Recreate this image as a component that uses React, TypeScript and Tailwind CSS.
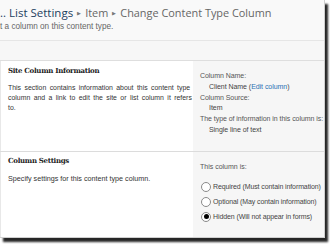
import React from "react";

const Radio = ({ checked, label }: { checked?: boolean; label: string }) => {
  return (
    <div className="flex items-center gap-[2px] h-[15px]">
      <span className="w-[10px] h-[10px] rounded-full border border-[#8a8a8a] bg-white flex items-center justify-center shrink-0">
        {checked && <span className="w-[5px] h-[5px] rounded-full bg-black" />}
      </span>
      <span className="whitespace-nowrap tracking-[-0.1px]">{label}</span>
    </div>
  );
};

const App = () => {
  return (
    <div className="w-[330px] h-[244px] bg-white overflow-hidden font-['Liberation_Sans',sans-serif]">
      <div className="w-[325px] h-[238px] bg-white flex flex-col shadow-[3px_4px_2px_rgba(0,0,0,0.85)] border-r border-b border-[#cfcfcf] overflow-hidden">
        <div className="h-[41px] bg-[#f9f9f9] border-b border-[#e6e6e6] shrink-0">
          <div className="pt-[5px] text-[11.5px] leading-[16px] whitespace-nowrap font-['Open_Sans',sans-serif]">
            <span className="text-[#1d3f5f]">.. List Settings</span>
            <span className="text-[#777] text-[5px] px-[4px] align-[2px]">▶</span>
            <span className="text-[#666] text-[10.9px]">Item</span>
            <span className="text-[#777] text-[5px] px-[4px] align-[2px]">▶</span>
            <span className="text-[#666] text-[10.9px]">Change Content Type Column</span>
          </div>
          <div className="text-[8.2px] leading-[10px] text-[#666] whitespace-nowrap mt-[1px]">
            t a column on this content type.
          </div>
        </div>
        <div className="h-[20px] bg-[#f7f7f7] border-b border-[#dedede] shrink-0" />
        <div className="grid grid-cols-[193px_1fr] h-[91px] border-b border-[#dcdcdc] text-[7.2px] leading-[10px] shrink-0">
          <div className="pl-[7px] pt-[5px] text-[#333] border-l border-[#e8e8e8]">
            <div className="font-bold text-[7px] text-[#222] font-['DejaVu_Serif',serif] tracking-[-0.3px]">
              Site Column Information
            </div>
            <div className="mt-[7px] w-[186px] text-[6.9px] [word-spacing:1.5px]">
              This section contains information about this content type column and a link to edit the site or list column it refers to.
            </div>
          </div>
          <div className="bg-[#f6f6f6] pl-[7px] pt-[10px] text-[#555] text-[7px] leading-[10.8px] whitespace-nowrap tracking-[-0.05px]">
            <div>Column Name:</div>
            <div className="pl-[9px] text-[#444]">
              Client Name (<span className="text-[#2a72b5]">Edit column</span>)
            </div>
            <div>Column Source:</div>
            <div className="pl-[9px] text-[#444]">Item</div>
            <div>The type of information in this column is:</div>
            <div className="pl-[9px] text-[#444]">Single line of text</div>
          </div>
        </div>
        <div className="grid grid-cols-[193px_1fr] flex-1 text-[7.2px] leading-[10px]">
          <div className="pl-[7px] pt-[4px] text-[#333] border-l border-[#e8e8e8]">
            <div className="font-bold text-[7px] text-[#222] font-['DejaVu_Serif',serif] tracking-[-0.3px]">
              Column Settings
            </div>
            <div className="mt-[8px]">Specify settings for this content type column.</div>
          </div>
          <div className="bg-[#f6f6f6] pl-[7px] pt-[10px] text-[#555] text-[7px]">
            <div>This column is:</div>
            <div className="pl-[1px] mt-[7px] flex flex-col text-[#444]">
              <Radio label="Required (Must contain information)" />
              <Radio label="Optional (May contain information)" />
              <Radio checked label="Hidden (Will not appear in forms)" />
            </div>
          </div>
        </div>
      </div>
    </div>
  );
};

export default App;
